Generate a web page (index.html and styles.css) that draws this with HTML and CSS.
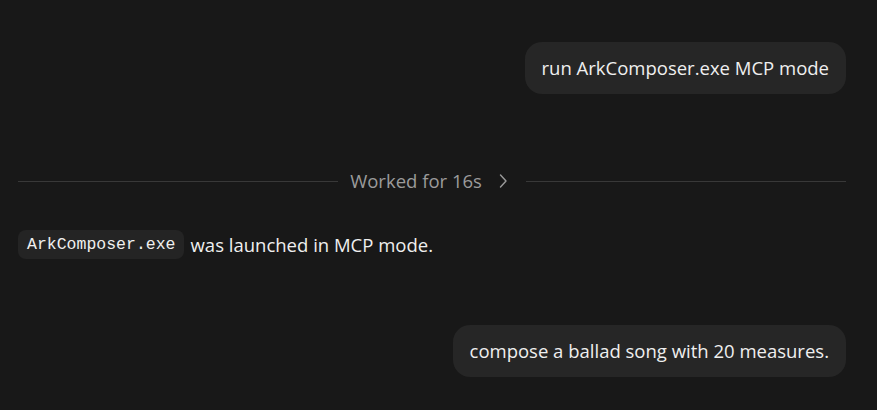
FILE: index.html
```html
<!DOCTYPE html>
<html>
<head>
<meta charset="utf-8">
<link rel="stylesheet" href="styles.css">
</head>
<body>
<main class="thread">
  <div class="row user first">
    <div class="bubble">run ArkComposer.exe MCP mode</div>
  </div>
  <div class="worked">
    <span class="line"></span>
    <span class="worked-label">Worked for 16s</span>
    <svg class="chev" width="12" height="16" viewBox="0 0 12 16"><path d="M3.5 2 L9 8 L3.5 14" fill="none" stroke="#9a9a9a" stroke-width="1.4" stroke-linecap="round" stroke-linejoin="round"/></svg>
    <span class="line"></span>
  </div>
  <p class="assistant"><code class="chip">ArkComposer.exe</code> was launched in MCP mode.</p>
  <div class="row user second">
    <div class="bubble">compose a ballad song with 20 measures.</div>
  </div>
</main>
</body>
</html>
```
FILE: styles.css
```css
html, body {
  margin: 0;
  padding: 0;
  background: #181818;
  height: 100%;
}
body {
  font-family: "Open Sans", "Noto Sans", sans-serif;
  color: #efefef;
}
.thread {
  padding: 42px 31px 0 18px;
  display: flex;
  flex-direction: column;
}
.row {
  display: flex;
  justify-content: flex-end;
}
.bubble {
  background: #262626;
  border-radius: 17px;
  padding: 0 17px 2px;
  height: 50px;
  display: flex;
  align-items: center;
  font-size: 18.5px;
}
.worked {
  display: flex;
  align-items: center;
  margin-top: 75px;
  height: 24px;
}
.line {
  flex: 1;
  height: 1px;
  background: #383838;
}
.worked-label {
  margin-left: 12px;
  padding-bottom: 2px;
  font-size: 18.5px;
  color: #9b9b9b;
}
.chev {
  margin-left: 15px;
  margin-right: 17px;
}
.assistant {
  margin: 37px 0 0 0;
  font-size: 18.5px;
  display: flex;
  align-items: center;
}
.chip {
  font-family: "Liberation Mono", monospace;
  font-size: 16.5px;
  background: #242424;
  border-radius: 8px;
  padding: 5px 8px 5px 9px;
  margin-right: 7px;
}
.second {
  margin-top: 66px;
}
```
